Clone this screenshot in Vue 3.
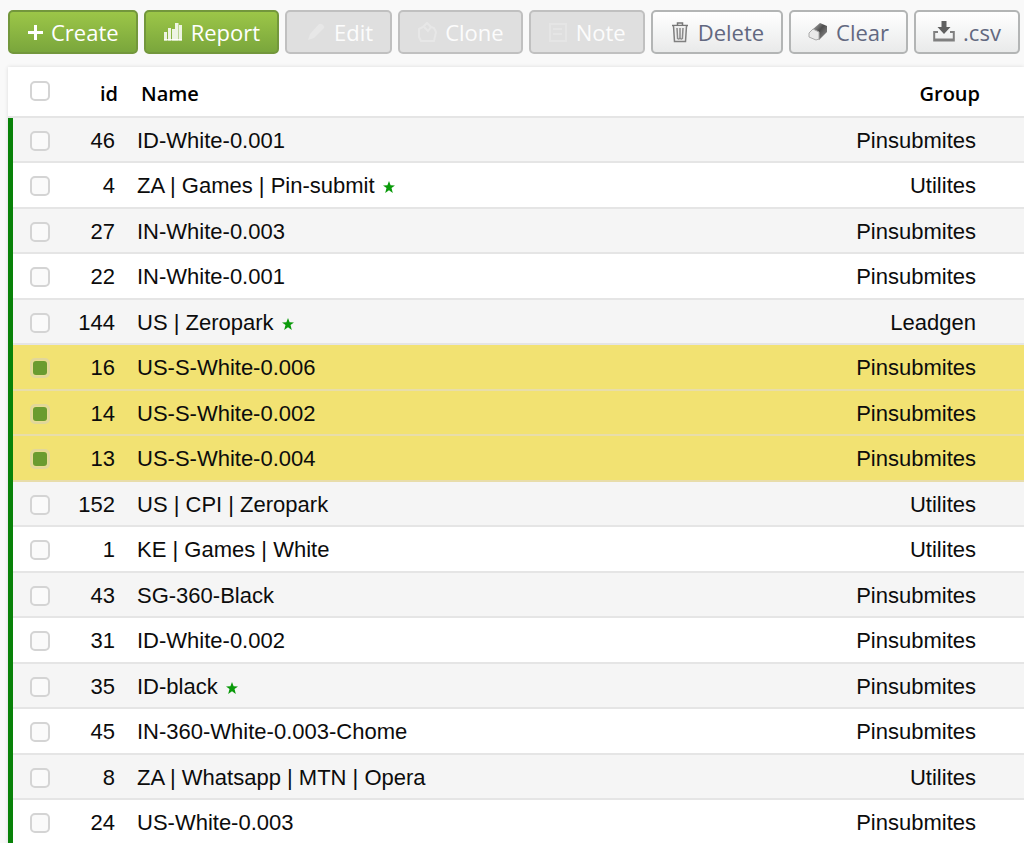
<script setup>
import { ref } from 'vue'

const actions = [
  { icon: 'plus', label: 'Create', kind: 'primary' },
  { icon: 'bars', label: 'Report', kind: 'primary' },
  { icon: 'pencil', label: 'Edit', kind: 'muted' },
  { icon: 'copy', label: 'Clone', kind: 'muted' },
  { icon: 'note', label: 'Note', kind: 'muted' },
  { icon: 'trash', label: 'Delete', kind: 'plain' },
  { icon: 'eraser', label: 'Clear', kind: 'plain' },
  { icon: 'download', label: '.csv', kind: 'plain' },
]

const allSelected = ref(false)
const rows = ref([
  { id: 46, name: 'ID-White-0.001', group: 'Pinsubmites' },
  { id: 4, name: 'ZA | Games | Pin-submit', group: 'Utilites', star: true },
  { id: 27, name: 'IN-White-0.003', group: 'Pinsubmites' },
  { id: 22, name: 'IN-White-0.001', group: 'Pinsubmites' },
  { id: 144, name: 'US | Zeropark', group: 'Leadgen', star: true },
  { id: 16, name: 'US-S-White-0.006', group: 'Pinsubmites', selected: true },
  { id: 14, name: 'US-S-White-0.002', group: 'Pinsubmites', selected: true },
  { id: 13, name: 'US-S-White-0.004', group: 'Pinsubmites', selected: true },
  { id: 152, name: 'US | CPI | Zeropark', group: 'Utilites' },
  { id: 1, name: 'KE | Games | White', group: 'Utilites' },
  { id: 43, name: 'SG-360-Black', group: 'Pinsubmites' },
  { id: 31, name: 'ID-White-0.002', group: 'Pinsubmites' },
  { id: 35, name: 'ID-black', group: 'Pinsubmites', star: true },
  { id: 45, name: 'IN-360-White-0.003-Chome', group: 'Pinsubmites' },
  { id: 8, name: 'ZA | Whatsapp | MTN | Opera', group: 'Utilites' },
  { id: 24, name: 'US-White-0.003', group: 'Pinsubmites' },
].map((r) => ({ star: false, selected: false, ...r })))

function toggleAll() {
  rows.value.forEach((r) => { r.selected = allSelected.value })
}
</script>

<template>
  <main class="page">
    <div class="toolbar">
      <button v-for="a in actions" :key="a.label" type="button" class="btn" :class="a.kind" :disabled="a.kind === 'muted'">
        <svg v-if="a.icon === 'plus'" class="icon small" viewBox="0 0 16 22" aria-hidden="true">
          <path d="M8.500 4v15M1 11.500h15" stroke="#fff" stroke-width="3" />
        </svg>
        <svg v-else-if="a.icon === 'bars'" class="icon" viewBox="0 0 20 22" aria-hidden="true">
          <path d="M1 11h3v8.500H1zM5 7h3v12.500H5zM9 8h3v11.500H9zM12 2h3.500v17.500H12zM16 4h3v15.500h-3z" fill="#fff" opacity=".85" />
          <path d="M1 18h18v1.500H1z" fill="#fff" opacity=".8" />
        </svg>
        <svg v-else-if="a.icon === 'pencil'" class="icon wide" viewBox="0 0 22 22" aria-hidden="true">
          <path d="M4 19l2-6L15 3q2-1 4 1t1 3L10 17z" fill="#e7e7e7" />
        </svg>
        <svg v-else-if="a.icon === 'copy'" class="icon" viewBox="1 0 20 22" aria-hidden="true">
          <path d="M3 8l4-2 4-4 4 4 3 1 2 4-2 9H5L3 16z" fill="none" stroke="#e7e7e7" stroke-width="2" />
          <path d="M8 6l4 4 3-4" fill="none" stroke="#e7e7e7" stroke-width="2" />
        </svg>
        <svg v-else-if="a.icon === 'note'" class="icon" viewBox="1 0 20 22" aria-hidden="true">
          <path d="M3 3h16v17H3zM6 8h9M6 13h9" fill="none" stroke="#e5e5e5" stroke-width="2" />
        </svg>
        <svg v-else-if="a.icon === 'trash'" class="icon" viewBox="1 0 20 22" aria-hidden="true">
          <path d="M3 4.500h16M8.500 4V2h5v2" fill="none" stroke="#777" stroke-width="1.500" />
          <path d="M4.500 5l1 15.500h11l1-15.500" fill="#eee" stroke="#808080" stroke-width="1.500" />
          <path d="M8 7l.6 10.500q1.400 1 2.400-.5 1 1.500 2.400.5L14 7M11 7v10" fill="none" stroke="#8a8a8a" stroke-width="1.500" />
        </svg>
        <svg v-else-if="a.icon === 'eraser'" class="icon" viewBox="1 0 20 22" aria-hidden="true">
          <defs>
            <linearGradient id="rubber" x1="0" y1="0" x2="1" y2="1">
              <stop offset="0" stop-color="#bbb" />
              <stop offset=".45" stop-color="#4d4d4d" />
              <stop offset="1" stop-color="#999" />
            </linearGradient>
          </defs>
          <path d="M6 8l7-6 7 3v6l-8 8z" fill="url(#rubber)" />
          <path d="M2 12l4-4 6 3v7l-3 1-7-3z" fill="#e9e9e9" stroke="#aaa" />
        </svg>
        <svg v-else class="icon wide" viewBox="0 0 22 22" aria-hidden="true">
          <path d="M8.500 0h5v6h4L11 13 4.500 6h4z" fill="#606060" />
          <path d="M5 11H1.200v8.500h19.600V11H17" fill="none" stroke="#808080" stroke-width="2" />
          <path d="M2 18.500h18" stroke="#808080" stroke-width="2" />
        </svg>
        <span>{{ a.label }}</span>
      </button>
    </div>

    <table class="grid">
      <thead>
        <tr>
          <th class="check"><input v-model="allSelected" type="checkbox" aria-label="Select all" @change="toggleAll"></th>
          <th class="id">id</th>
          <th class="name">Name</th>
          <th class="group">Group</th>
        </tr>
      </thead>
      <tbody>
        <tr v-for="r in rows" :key="r.id" :class="{ selected: r.selected }">
          <td class="check"><input v-model="r.selected" type="checkbox" :aria-label="'Select ' + r.name"></td>
          <td class="id">{{ r.id }}</td>
          <td class="name">
            {{ r.name }}
            <svg v-if="r.star" class="star" viewBox="0 0 12 12" aria-hidden="true">
              <path d="M6 0l1.600 4.200 4.400.2-3.500 2.700L9.800 12 6 9.200 2.200 12l1.300-4.900L0 4.400l4.400-.2z" fill="#0a9a0a" />
            </svg>
          </td>
          <td class="group">{{ r.group }}</td>
        </tr>
      </tbody>
    </table>
  </main>
</template>

<style>
body {
  background: #f9f9f9;
  overflow: hidden;
}
</style>

<style scoped>
.page {
  height: 100vh;
  overflow: hidden;
  box-sizing: border-box;
  padding: 10px 0 0 8px;
}
.toolbar {
  display: flex;
  gap: 6px;
  margin-bottom: 13px;
}
.btn {
  display: flex;
  align-items: center;
  gap: 8px;
  flex: none;
  box-sizing: border-box;
  height: 44px;
  padding: 0 17px;
  border: 2px solid #b3b5b5;
  border-radius: 5px;
  font: 500 22px/30px "Open Sans", "Noto Sans", sans-serif;
}
.primary {
  color: #fff;
  border-color: #73973c;
  background: linear-gradient(#9cc648, #7aa63c);
}
.muted {
  color: #fcfcfc;
  border-color: #c0c0c0;
  background: #dfdfdf;
}
.plain {
  color: #626880;
  background: linear-gradient(#fff, #e9eaea);
}
.icon {
  width: 20px;
  height: 22px;
  flex: none;
}
.icon.small {
  width: 16px;
}
.icon.wide {
  width: 22px;
}
.grid {
  width: 100%;
  border-collapse: separate;
  border-spacing: 0;
  background: #fff;
  box-shadow: 0 0 4px rgba(0, 0, 0, 0.12);
  color: #0c0c0c;
  font: 22px/26px "Liberation Sans", Arial, sans-serif;
}
th,
td {
  padding: 0;
  box-sizing: border-box;
  white-space: nowrap;
}
th {
  height: 51px;
  padding-top: 4px;
  border-bottom: 2px solid #e5e5e5;
  font: 600 20px/28px "Open Sans", "Noto Sans", sans-serif;
  color: #000;
}
td {
  height: 46px;
  box-shadow: inset 0 -2px #e5e5e5;
}
tr:nth-child(odd) td {
  height: 45px;
  background: #f5f5f5;
}
tbody .check {
  border-left: 5px solid #088208;
}
tbody tr.selected td {
  background: #f2e272;
  box-shadow: inset 0 -2px #e8ddaa;
}
.check {
  width: 46px;
  padding-left: 17px;
  text-align: left;
}
th.check {
  padding: 0 0 2px 22px;
}
.id {
  width: 64px;
  text-align: right;
}
td.id {
  padding-right: 3px;
}
.name {
  padding-left: 23px;
  text-align: left;
}
td.name {
  padding-left: 19px;
}
.group {
  text-align: right;
  padding-right: 44px;
}
td.group {
  padding-right: 48px;
}
input {
  appearance: none;
  display: grid;
  place-content: center;
  width: 20px;
  height: 20px;
  box-sizing: border-box;
  margin: 0;
  border: 2px solid #d4d4d4;
  border-radius: 5px;
  background: #fff;
}
td input {
  background: #fafafa;
}
input:checked {
  border-color: #e2d79a;
  background: #e8dc92;
}
input:checked::before {
  content: "";
  width: 14px;
  height: 14px;
  border-radius: 3px;
  background: #6a9b30;
}
.star {
  width: 12px;
  height: 12px;
  margin-left: 2px;
}
</style>
